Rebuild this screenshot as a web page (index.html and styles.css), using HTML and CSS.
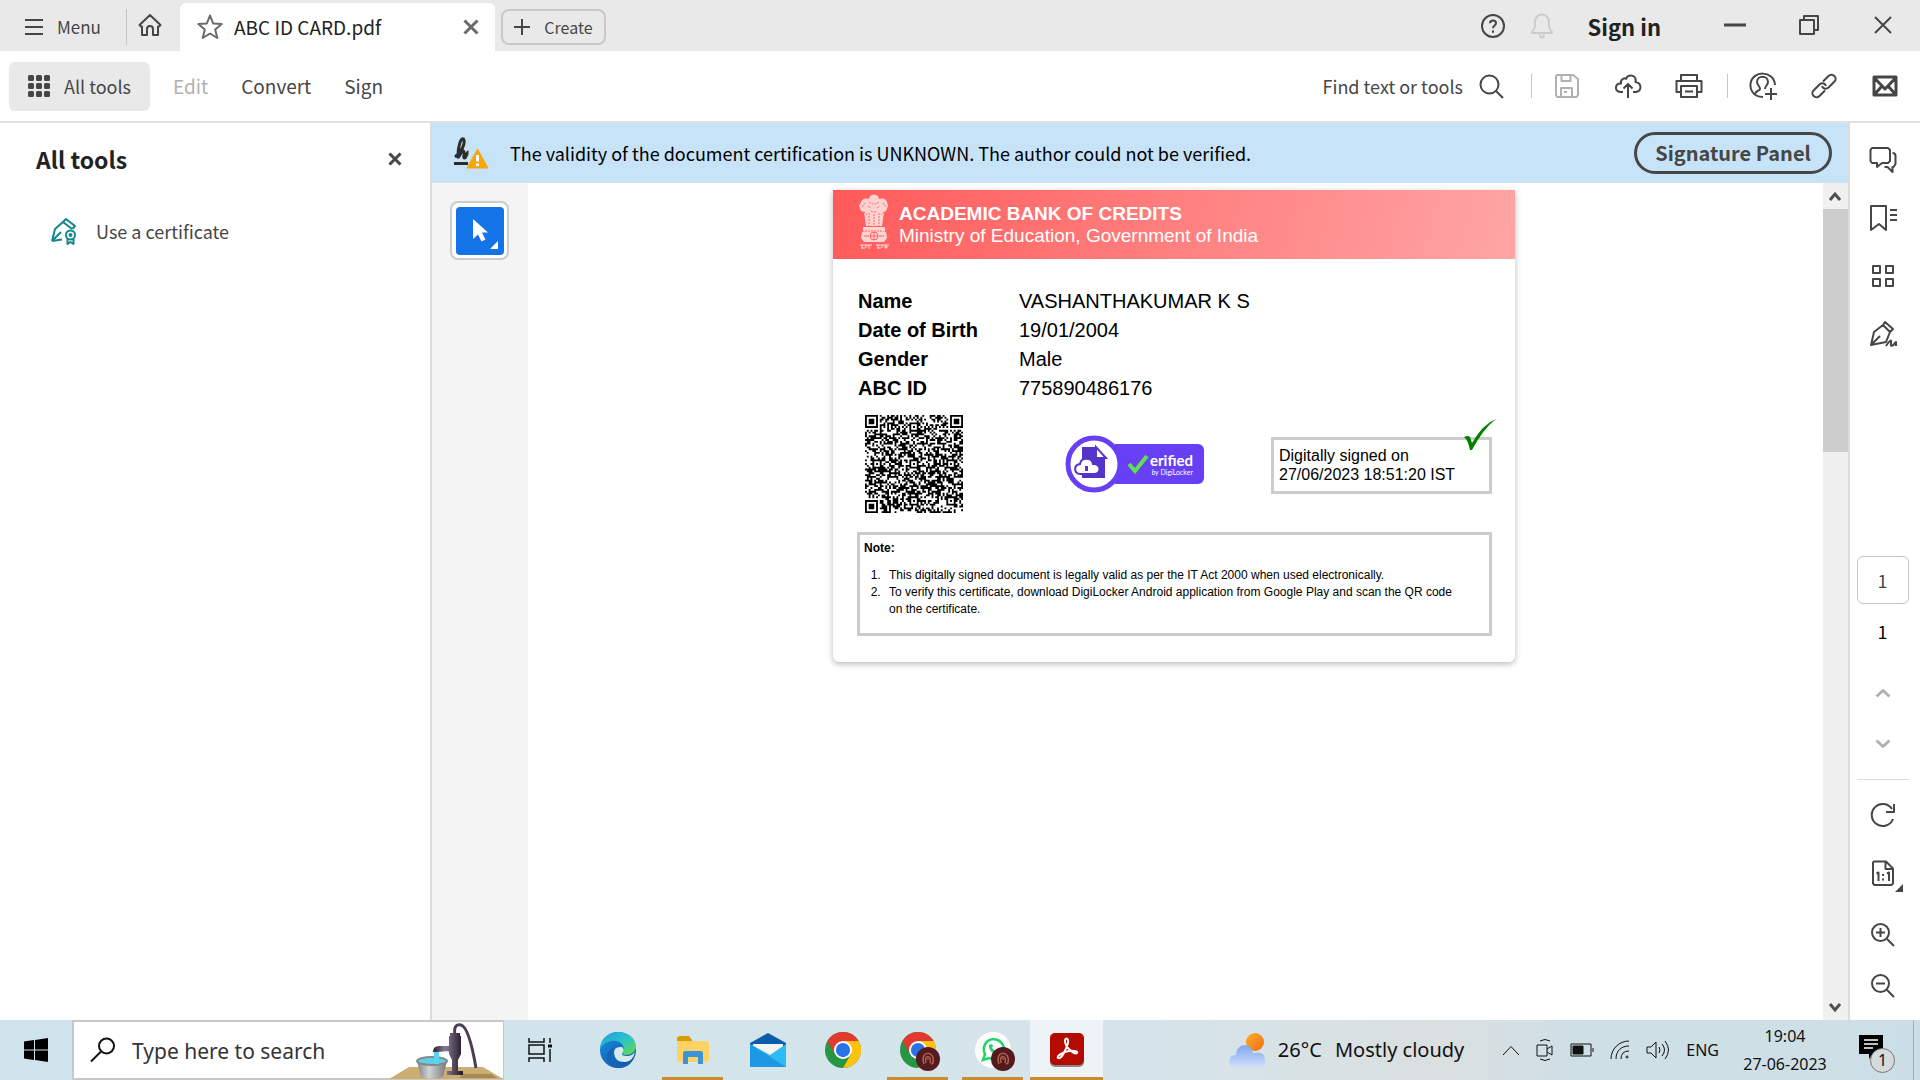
FILE: index.html
```
<!DOCTYPE html>
<html lang="en">
<head>
<meta charset="utf-8">
<title>ABC ID CARD.pdf</title>
<link rel="stylesheet" href="styles.css">
</head>
<body>
<header class="titlebar">
  <button class="menu-btn"><svg width="18" height="18" viewBox="0 0 18 18" class="ico"><path d="M0 2h18M0 9h18M0 16h18"/></svg>Menu</button>
  <button class="home-btn" aria-label="Home"><svg width="24" height="24" viewBox="0 0 24 24" class="ico"><path d="M1.500 12 12 2l10.500 10-1.500 1.500h-1V22h-5v-6a3 3 0 0 0-6 0v6H4v-8.500H3z"/></svg></button>
  <div class="tab">
    <svg width="28" height="28" viewBox="0 0 28 28" class="ico star"><path d="m14 2.500 3.200 8 8.500.6-6.500 5.500 2.100 8.400L14 20.500 6.700 25l2.100-8.400L2.300 11.100l8.500-.6z"/></svg>
    <span class="tab-name">ABC ID CARD.pdf</span>
    <button class="icon-btn" aria-label="Close tab"><svg width="16" height="16" viewBox="0 0 16 16" class="ico close"><path d="m1.500 1.500 13 13M14.500 1.500l-13 13"/></svg></button>
  </div>
  <button class="create-btn"><svg width="16" height="16" viewBox="0 0 16 16" class="ico"><path d="M8 0v16M0 8h16"/></svg>Create</button>
  <div class="title-actions">
    <button class="icon-btn" aria-label="Help"><svg width="26" height="26" viewBox="0 0 26 26" class="ico"><circle cx="13" cy="13" r="11"/><path d="M10 10.200c0-3.600 6-3.600 6 0 0 2.200-3 2.500-3 5M13 17.500v2.200"/></svg></button>
    <button class="icon-btn" aria-label="Notifications"><svg width="24" height="28" viewBox="0 0 24 28" class="ico pale"><path d="M2 21c0-3 3-3 3-7V10c0-10 14-10 14 0v4c0 4 3 4 3 7zM10 22.500c0 4 4 4 4 0"/></svg></button>
    <button class="signin">Sign in</button>
  </div>
  <div class="window-btns">
    <button aria-label="Minimize"><svg width="22" height="22" viewBox="0 0 22 22" class="ico heavy"><path d="M0 11h22"/></svg></button>
    <button aria-label="Restore"><svg width="20" height="20" viewBox="0 0 20 20" class="ico"><path d="M1 5h14v14H1zM5 5V1h14v14h-4"/></svg></button>
    <button aria-label="Close"><svg width="18" height="18" viewBox="0 0 18 18" class="ico"><path d="m1 1 16 16M17 1 1 17"/></svg></button>
  </div>
</header>

<nav class="toolbar">
  <button class="alltools-btn"><svg width="22" height="22" viewBox="0 0 22 22" class="ico cells"><path d="M1.500 1.500h3v3h-3zM9.500 1.500h3v3h-3zM17.500 1.500h3v3h-3zM1.500 9.500h3v3h-3zM9.500 9.500h3v3h-3zM17.500 9.500h3v3h-3zM1.500 17.500h3v3h-3zM9.500 17.500h3v3h-3zM17.500 17.500h3v3h-3z"/></svg>All tools</button>
  <button class="nav-btn" disabled>Edit</button>
  <button class="nav-btn">Convert</button>
  <button class="nav-btn">Sign</button>
  <button class="find-btn">Find text or tools<svg width="25" height="25" viewBox="0 0 25 25" class="ico"><circle cx="10.500" cy="10.500" r="9"/><path d="m17 17 7 7"/></svg></button>
  <div class="tool-icons">
    <button disabled aria-label="Save"><svg width="26" height="24" viewBox="0 0 26 24" class="ico grey"><path d="M3 1h16l5 4v16l-1.500 2h-19L2 21.500V2zM7.500 1v6h9V1M7 23v-9h11v9M10 18h3"/></svg></button>
    <button aria-label="Upload"><svg width="28" height="26" viewBox="0 0 28 26" class="ico"><path d="M9 19H6c-6-1-5-9 1-8.500C6 6 11 4.500 12 6c2-6 11-4 9.500 3C28 10 28 18 22 19h-3M14 25V11M9.500 15.500 14 11l4.500 4.500"/></svg></button>
    <button aria-label="Print"><svg width="28" height="26" viewBox="0 0 28 26" class="ico"><path d="M6 7V2h16v5M6 19H1.500V8h25v11H22M6 13h16v11H6zM10 18.500h8"/></svg></button>
  </div>
  <div class="tool-icons">
    <button aria-label="Share"><svg width="28" height="28" viewBox="0 0 28 28" class="ico"><path d="M14 25C3 25 1 16 1.500 12 3-2 25-2 26 13M6 22c1-4 5-3 5-5 0-3-3-4-3-7 0-7 11-7 11 0 0 3-3 4-3 7M22 16v12M16 22h12"/></svg></button>
    <button aria-label="Copy link"><svg width="26" height="26" viewBox="0 0 26 26" class="ico"><path d="M12 8.500 17.500 3c4-4 9.500 2 6 5.500l-6 6c-3 2.500-6 .5-6.500-1.500M14 17.500 8.500 23C4.500 27-1 21 2.500 17.500l6-6c3-2.500 6-.5 6.500 1.500"/></svg></button>
    <button aria-label="Send by email"><svg width="26" height="22" viewBox="0 0 26 22" class="ico heavy"><path d="M2 2h22v18H2zM2 2.500 13 14 24 2.500M2 20l8-9M24 20l-8-9"/></svg></button>
  </div>
</nav>

<main class="workspace">
  <aside class="tools-pane">
    <div class="pane-head"><h1>All tools</h1><button class="icon-btn" aria-label="Close pane"><svg width="14" height="14" viewBox="0 0 14 14" class="ico heavy"><path d="m1.500 1.500 11 11M12.500 1.500l-11 11"/></svg></button></div>
    <a href="#" class="pane-link"><svg width="28" height="28" viewBox="0 0 28 28" class="ico teal"><path d="M2 24 5 12l8-7 9 7M2 24l10-1.500M2.500 23.500 11 15M13 5l3-3 9 7-2.500 3"/><circle cx="20.500" cy="18" r="4.500"/><path d="M17.500 21.500V27l3-2 3 2v-5.500"/><circle cx="20.500" cy="18" r="1"/></svg>Use a certificate</a>
  </aside>

  <section class="viewer">
    <div class="banner">
      <svg width="36" height="32" viewBox="0 0 36 32"><path d="M2 20c6-4 11-14 8.500-18C8 0 5 9 5 19c0 5 3-6 5.500-5 2 1-1 7 1 7s2-6 4-6M1 26.500h14" fill="none" stroke="#2c2c2c" stroke-width="3"/><path d="M24.500 12 35 31H14z" fill="#f9a60d" stroke="#f9a60d" stroke-linejoin="round"/><path d="M24.500 18v6.500M24.500 26.500v2.500" stroke="#fff" stroke-width="3"/></svg>
      <p>The validity of the document certification is UNKNOWN. The author could not be verified.</p>
      <button class="sig-btn">Signature Panel</button>
    </div>
    <div class="stage">
      <div class="quick-tools">
        <button class="select-btn" aria-label="Select"><svg width="48" height="48" viewBox="0 0 48 48"><path d="M17 12v20l5-4.500 3.500 7 4-2-3.500-7h6z" fill="#fff"/><path d="M42 34v8h-8z" fill="#fff"/></svg></button>
      </div>
      <div class="page-area">
        <article class="card">
          <header class="card-head">
            <svg class="emblem" width="32" height="57" viewBox="0 0 32 57"><g fill="#fff" fill-opacity=".72"><path d="M12 2q4-3 8 0l1 3q6-2 8 3l1 4-2 5-2 1-2 14H8L6 18l-3-1-2-5 2-4q2-5 8-3z"/><path d="M5 33h22v4H5zM4 38q12-5 24 0l1 6-3 4H6l-3-4z"/></g><g fill="none" stroke="#ff6464"><path d="M11 8q5 4 10 0M10 12l3 2M19 14l3-2M13 17q3 2 6 0M7 9l-3 4M25 9l3 4M11 19v13M16 20v12M21 19v13M6 18l3 3M26 18l-3 3M7 37h18" stroke-dasharray="2 1"/><circle cx="16" cy="42" r="4"/><path d="M16 38v8M12 42h8M6 42h5M21 42h5"/></g><path d="M2 51h12M18 51h13M4 51v4M8 51v3M11 51v4M20 51v4M24 51v3M28 51v4M4 54h3M20 54h3M26 53h4" stroke="#fff" stroke-opacity=".8" fill="none"/></svg>
            <div><h2>ACADEMIC BANK OF CREDITS</h2><p>Ministry of Education, Government of India</p></div>
          </header>
          <div class="card-body">
            <dl class="details">
              <dt>Name</dt><dd>VASHANTHAKUMAR K S</dd>
              <dt>Date of Birth</dt><dd>19/01/2004</dd>
              <dt>Gender</dt><dd>Male</dd>
              <dt>ABC ID</dt><dd>775890486176</dd>
            </dl>
            <div class="proofs">
              <svg class="qr" id="qr" width="98" height="98" viewBox="0 0 53 53" role="img" aria-label="QR code"></svg>
              <div class="verified">
                <svg width="58" height="58" viewBox="0 0 58 58"><circle cx="29" cy="29" r="26" fill="#fff" stroke="#673ff5" stroke-width="5"/><path d="M17 12h14v11h9v20H17z" fill="#5535c9"/><path d="M31 12v11h10z" fill="#fff" stroke="#5535c9" stroke-width="2"/><path d="M15 39c-6 0-7-9 0-10 1-7 12-7 13 0 8-1 9 10 1 10z" fill="#fff" stroke="#5535c9" stroke-width="2"/><path d="M20 31h3v5h-3z" fill="#5535c9"/></svg>
                <div class="verified-tag"><svg width="22" height="20" viewBox="0 0 22 20"><path d="m2 10 6 7L20 2" fill="none" stroke="#5fe04c" stroke-width="4"/></svg><div><b>erified</b><small><i>by</i> DigiLocker</small></div></div>
              </div>
              <div class="signed">Digitally signed on<br>27/06/2023 18:51:20 IST<svg class="tick" width="34" height="32" viewBox="0 0 34 32"><path d="M1 18q4-2 6 0l2 6Q20 5 33 0 20 10 9 31H7Q5 21 1 18z" fill="#008000"/></svg></div>
            </div>
            <div class="note">
              <h3>Note:</h3>
              <ol>
                <li>This digitally signed document is legally valid as per the IT Act 2000 when used electronically.</li>
                <li>To verify this certificate, download DigiLocker Android application from Google Play and scan the QR code on the certificate.</li>
              </ol>
            </div>
          </div>
        </article>
      </div>
      <div class="scrollbar">
        <svg width="24" height="26" viewBox="0 0 24 26"><path d="m7 17 5-6 5 6" fill="none" stroke="#505050" stroke-width="3"/></svg>
        <div class="thumb"></div>
        <svg width="24" height="26" viewBox="0 0 24 26"><path d="m7 10 5 6 5-6" fill="none" stroke="#505050" stroke-width="3"/></svg>
      </div>
    </div>
  </section>

  <aside class="rail">
    <button class="rail-btn" aria-label="Comments"><svg width="28" height="28" viewBox="0 0 28 28" class="ico"><path d="M3 2h16l2 2v11l-2 2h-6l-5 4v-4H3l-1.500-2V4zM23.500 7q3 0 3 3v8l-2 3h-1v5l-5-5h-3"/></svg></button>
    <button class="rail-btn" aria-label="Bookmarks"><svg width="28" height="28" viewBox="0 0 28 28" class="ico"><path d="M3 2h14v24l-7-6-8 6V2zM21 6h7M21 11h7M21 16h7"/></svg></button>
    <button class="rail-btn" aria-label="Thumbnails"><svg width="24" height="24" viewBox="0 0 24 24" class="ico"><path d="M2 2h7v7H2zM15 2h7v7h-7zM2 15h7v7H2zM15 15h7v7h-7z"/></svg></button>
    <button class="rail-btn" aria-label="Signatures"><svg width="28" height="28" viewBox="0 0 28 28" class="ico"><path d="M2 25 5 12l9-7 7 7-4 10zM2 25l9-9M14 5l2-3 8 7-3 3M17 26q6-9 5-3t5-1v4"/></svg></button>
    <div class="rail-bottom">
      <input class="page-box" type="text" value="1" aria-label="Page number">
      <span class="page-total">1</span>
      <button class="step-btn" disabled aria-label="Previous page"><svg width="16" height="10" viewBox="0 0 16 10" class="ico grey heavy"><path d="m1.500 8.500 6.500-6 6.500 6"/></svg></button>
      <button class="step-btn" disabled aria-label="Next page"><svg width="16" height="10" viewBox="0 0 16 10" class="ico grey heavy"><path d="m1.500 1.500 6.500 6 6.500-6"/></svg></button>
      <hr>
      <button class="view-btn" aria-label="Rotate"><svg width="26" height="26" viewBox="0 0 26 26" class="ico"><path d="M23 17a11 11 0 1 1-1-10M24 2v8h-8"/></svg></button>
      <button class="view-btn fit-btn" aria-label="Actual size"><svg width="24" height="26" viewBox="0 0 24 26" class="ico"><path d="M3 1.500h12l7 7v15L20.500 25h-17L2 23.500v-21zM14.500 1.500V9H22M5.500 13.500l2-1V21M16 13.500l2-1V21M12 14v2M12 18.500v2"/></svg></button>
      <button class="zoom-btn" aria-label="Zoom in"><svg width="26" height="26" viewBox="0 0 26 26" class="ico"><circle cx="10.500" cy="10.500" r="8.500"/><path d="m17 17 7 7M10.500 6v9M6 10.500h9"/></svg></button>
      <button class="zoom-btn" aria-label="Zoom out"><svg width="26" height="26" viewBox="0 0 26 26" class="ico"><circle cx="10.500" cy="10.500" r="8.500"/><path d="m17 17 7 7M6 10.500h9"/></svg></button>
    </div>
  </aside>
</main>

<svg width="0" height="0" class="defs" aria-hidden="true">
  <defs>
    <linearGradient id="edgeTop" x1="0" y1="0" x2="1" y2="1"><stop offset="0" stop-color="#1e9ce8"/><stop offset=".5" stop-color="#2ac3c8"/><stop offset="1" stop-color="#69db3f"/></linearGradient>
    <linearGradient id="edgeLow" x1="0" y1="0" x2="1" y2="1"><stop offset="0" stop-color="#1b8fe0"/><stop offset="1" stop-color="#0c4f9c"/></linearGradient>
    <linearGradient id="cloud" x1="0" y1="0" x2="0" y2="1"><stop offset="0" stop-color="#7fa8ee"/><stop offset="1" stop-color="#d3e0fb"/></linearGradient>
    <linearGradient id="sun" x1="0" y1="0" x2="1" y2="1"><stop offset="0" stop-color="#fbb02a"/><stop offset="1" stop-color="#f26b12"/></linearGradient>
    <linearGradient id="metal" x1="0" y1="0" x2="1" y2="0"><stop offset="0" stop-color="#2a2030"/><stop offset=".4" stop-color="#8a7d94"/><stop offset="1" stop-color="#1e1724"/></linearGradient>
    <linearGradient id="pail" x1="0" y1="0" x2="1" y2="0"><stop offset="0" stop-color="#7d8285"/><stop offset=".4" stop-color="#d0d3d5"/><stop offset="1" stop-color="#777"/></linearGradient>
    <symbol id="chrome" viewBox="0 0 48 48"><circle cx="24" cy="24" r="24" fill="#259644"/><path d="M3.200 12A24 24 0 0 1 44.800 12H24L13.600 30z" fill="#e23a2e"/><path d="M44.800 12A24 24 0 0 1 24 48L34.400 30 24 12z" fill="#fdc30c"/><circle cx="24" cy="24" r="12" fill="#fff"/><circle cx="24" cy="24" r="9.500" fill="#2a72e8"/></symbol>
    <symbol id="profile" viewBox="0 0 24 24"><circle cx="12" cy="12" r="12" fill="#541a20"/><path d="M8 17c-5-14 12-14 9-1l-2 1M10 16c-3-9 7-8 4 0M12 11v2" fill="none" stroke="#b06048" stroke-width="1.500"/></symbol>
  </defs>
</svg>

<footer class="taskbar">
  <button class="start-btn" aria-label="Start"><svg width="24" height="24" viewBox="0 0 24 24"><path d="M0 3.500 10 2v9.500H0zM11 2l13-2v11.500H11zM0 12.500h10V22L0 20.500zM11 12.500h13V24l-13-2z"/></svg></button>
  <div class="searchbox">
    <svg width="26" height="26" viewBox="0 0 26 26"><circle cx="16.500" cy="9" r="7.500" fill="none" stroke="#111" stroke-width="2"/><path d="M11 14.500 1 24.500" stroke="#111" stroke-width="2"/></svg>
    <input type="text" placeholder="Type here to search" aria-label="Search">
    <svg width="114" height="57" viewBox="0 0 114 57"><path d="M20 45h74l20 12H0z" fill="#cdae72"/><path d="M74 52h28l6 4H70z" fill="#a98a52"/><path d="M66 14q-2-13 6-11 8 2 15 43" fill="none" stroke="#4a3d54" stroke-width="3"/><path d="M61 11h10v4h-10zM60 14h12v18l-3 6h-6l-3-6zM63 37h6v13h-6zM58 49h16v4H58zM60 24H50q-6 0-6 6h5l11-1z" fill="url(#metal)"/><path d="M28 39h30l-4 16q-12 3-22 0z" fill="url(#pail)"/><ellipse cx="43" cy="39" rx="15" ry="4" fill="#5fd0ea" stroke="#888" stroke-width="2"/><path d="M45 30h5v12h-5z" fill="#58d6f6"/></svg>
  </div>
  <button class="taskview-btn" aria-label="Task view"><svg width="24" height="24" viewBox="0 0 24 24" fill="none" stroke="#111" stroke-width="1.500"><path d="M1 0v4h15V0M1 24v-4h15v4M1 7h15v9H1zM22 0v5M22 11v13"/><path d="M20 8h4" stroke-width="3"/></svg></button>
  <div class="apps">
    <button aria-label="Edge"><svg width="36" height="36" viewBox="0 0 36 36"><circle cx="18" cy="18" r="18" fill="url(#edgeLow)"/><path d="M0 17C1-5 34-5 36 14c0 6-5 9-10 9-4 0-5-2-4-3 5-6-3-13-11-11Q3 11 0 17z" fill="url(#edgeTop)"/><path d="M22 15q3 3 0 6-1 3 5 3 5 0 8-4-2 9-9 10-11 1-12-9 0-7 8-6z" fill="#d8e8f0"/><path d="M13 19q-3 10 7 13 7 1 13-4-5 8-14 8Q7 35 7 24q1-7 8-9z" fill="#1564b4"/></svg></button>
    <button class="open" aria-label="File Explorer"><svg width="34" height="28" viewBox="0 0 34 28"><path d="M1 3q0-3 3-3h9l3 4v5H1z" fill="#dc9b05"/><path d="M1 5h29q3 0 3 3v15q0 3-3 3H3q-2 0-2-3z" fill="#fdd463"/><path d="M7 28V17q0-2 3-2h14q3 0 3 2v11h-5v-7H12v7z" fill="#3b92d8"/></svg></button>
    <button aria-label="Mail"><svg width="36" height="34" viewBox="0 0 36 34"><path d="M0 10 18 0l18 10v6H0z" fill="#0b5cab"/><path d="M3 11h30v9L18 28 3 20z" fill="#f4f4f4"/><path d="M0 11v23h36V11L20 22z" fill="#2cbcf2"/><path d="M0 11v23h36z" fill="#1d98e2"/></svg></button>
    <button aria-label="Chrome"><svg width="36" height="36"><use href="#chrome"/></svg></button>
    <button class="open" aria-label="Chrome profile"><svg width="36" height="36"><use href="#chrome"/></svg><svg class="badge" width="24" height="24"><use href="#profile"/></svg></button>
    <button class="open" aria-label="WhatsApp"><svg width="36" height="36" viewBox="0 0 36 36"><circle cx="18" cy="18" r="18" fill="#fff"/><path d="m8 28 2-6a10 10 0 1 1 4 4z" fill="none" stroke="#25d366" stroke-width="2.500"/><path d="M14 13c-1 5 4 9 9 9l1-3-3-1-1 1-3-3 1-2-1-2z" fill="#25d366"/></svg><svg class="badge" width="24" height="24"><use href="#profile"/></svg></button>
    <button class="open active" aria-label="Acrobat"><svg width="34" height="34" viewBox="0 0 34 34"><rect y="1" width="34" height="33" rx="5" fill="#888"/><rect width="34" height="32" rx="5" fill="#b30b00"/><path d="M8 25c-2-2 5-6 11-7 6-1 9 1 8 2-3 2-12-6-12-12 0-4 4-3 3 2-2 7-7 17-10 15z" fill="none" stroke="#fff" stroke-width="2"/></svg></button>
  </div>
  <div class="tray">
    <button class="weather"><svg width="36" height="36" viewBox="0 0 36 36"><circle cx="26" cy="10" r="9" fill="url(#sun)"/><path d="M7 36C-2 35-2 23 7 23 7 11 23 10 24 21c10-1 12 1 12 8 0 6-3 7-8 7z" fill="url(#cloud)"/></svg><span>26°C</span><span>Mostly cloudy</span></button>
    <button aria-label="Hidden icons"><svg width="18" height="11" viewBox="0 0 18 11" class="line"><path d="m1 10 8-8.500L17 10"/></svg></button>
    <button aria-label="Meet now"><svg width="18" height="24" viewBox="0 0 18 24" class="line"><path d="M4 3q5-3 10 0M4 21q5 3 10 0M1 7h10v11H1zM11 11l5-3v9l-5-3"/></svg></button>
    <button aria-label="Battery"><svg width="24" height="14" viewBox="0 0 24 14" class="line"><path d="M1 1h20v12H1zM23 5v4"/><path d="M3 3h10v8H3z" fill="#111"/></svg></button>
    <button aria-label="Wi-Fi"><svg width="20" height="20" viewBox="0 0 20 20" class="line"><path d="M1 19C1 9 9 1 19 1M6 19C6 11 11 6 19 6M11 19q0-8 8-8"/><circle cx="17" cy="17" r="1"/></svg></button>
    <button aria-label="Volume"><svg width="24" height="20" viewBox="0 0 24 20" class="line"><path d="M1 7h4l5-5v16l-5-5H1zM13 7q2 3 0 6M16 4q5 6 0 12M19 1q7 9 0 18"/></svg></button>
    <span class="lang">ENG</span>
    <time class="clock">19:04<br>27-06-2023</time>
    <button class="notice" aria-label="Notifications"><svg width="36" height="38" viewBox="0 0 36 38"><path d="M0 0h24v19H14l-4 5v-5H0z"/><path d="M5 5h14M5 9h14M5 13h9" stroke="#fff" stroke-width="1.500"/></svg><span class="count">1</span></button>
  </div>
</footer>
<script src="qr.js"></script>
</body>
</html>
```
FILE: styles.css
```
* { box-sizing: border-box; }
body {
  margin: 0;
  min-height: 100vh;
  display: flex;
  flex-direction: column;
  background: #fff;
  color: #464646;
  font: 18px/26px "Noto Sans CJK SC", "Noto Sans", sans-serif;
}
button {
  border: 0;
  padding: 0;
  background: none;
  color: inherit;
  font: inherit;
  display: flex;
  align-items: center;
  justify-content: center;
}
h1, h2, h3, p, dl, dd, ol { margin: 0; padding: 0; }
svg { flex: none; display: block; }
.defs { position: absolute; }
.ico { fill: none; stroke: #464646; stroke-width: 2; stroke-linejoin: round; }
.heavy, .cells, .close { stroke-width: 3; }
.close { stroke: #6a6a6a; }
.pale { stroke: #cbcbcb; }
.grey { stroke: #b1b1b1; }
.teal { stroke: #12878a; }
.line { fill: none; stroke: #111; stroke-width: 1; }

.titlebar { display: flex; height: 51px; background: #e9e9e9; }
.menu-btn { width: 127px; height: 36px; margin: 9px 0 0; padding-left: 25px; gap: 14px; justify-content: flex-start; border-right: 1px solid #c6c6c6; font-size: 17px; }
.home-btn { width: 46px; margin-right: 7px; padding-bottom: 1px; }
.tab { display: flex; align-items: center; width: 315px; margin-top: 3px; padding: 0 16px; border-radius: 6px 6px 0 0; background: #fff; }
.star { stroke: #6a6a6a; }
.tab-name { flex: 1; margin-left: 10px; font-size: 19px; color: #222; }
.create-btn { width: 105px; height: 36px; margin: 9px 0 0 6px; gap: 14px; border: 2px solid #c8c8c8; border-radius: 8px; font-size: 16px; }
.title-actions { display: flex; align-items: center; gap: 24px; margin-left: auto; margin-right: 37px; }
.signin { margin-left: 10px; font-size: 22px; font-weight: 700; color: #222; }
.window-btns { display: flex; }
.window-btns button { width: 74px; padding-bottom: 2px; }

.toolbar { display: flex; align-items: center; height: 72px; padding: 0 5px 0 9px; border-bottom: 2px solid #e1e1e1; }
.alltools-btn { width: 141px; height: 49px; gap: 14px; border-radius: 6px; background: #e9e9e9; }
.nav-btn { margin-left: 33px; font-size: 19px; }
.alltools-btn + .nav-btn { margin-left: 23px; }
.nav-btn:disabled { color: #b1b1b1; }
.find-btn { gap: 16px; margin-left: auto; margin-right: 27px; }
.tool-icons { display: flex; align-items: center; gap: 1px; height: 24px; padding-left: 5px; border-left: 1px solid #c6c6c6; }
.tool-icons + .tool-icons { margin-left: 8px; }
.tool-icons button { width: 60px; }

.workspace { flex: 1; display: flex; }
.tools-pane { width: 432px; border-right: 2px solid #dcdcdc; padding: 23px 28px 0 36px; }
.pane-head { display: flex; align-items: center; justify-content: space-between; }
.pane-head h1 { font-size: 23px; line-height: 26px; color: #222; }
.pane-link { display: flex; align-items: center; gap: 18px; margin: 45px 0 0 14px; color: #464646; text-decoration: none; }

.viewer { flex: 1; display: flex; flex-direction: column; }
.banner { display: flex; align-items: center; height: 60px; padding: 0 16px 0 21px; background: #c7e3f8; color: #000; }
.banner p { flex: 1; margin-left: 21px; }
.sig-btn { width: 198px; height: 42px; border: 3px solid #464646; border-radius: 21px; color: #464646; font-size: 20px; font-weight: 700; }
.stage { flex: 1; display: flex; }
.quick-tools { width: 96px; padding: 18px 0 0 18px; background: #f4f4f4; }
.select-btn { width: 59px; height: 59px; border: 2px solid #ccc; border-radius: 8px; background: #fff; }
.select-btn svg { border-radius: 4px; background: #1473e6; }
.page-area { flex: 1; padding: 7px 3px 0 0; }
.scrollbar { display: flex; flex-direction: column; width: 25px; background: #f0f0f0; }
.thumb { height: 243px; margin-bottom: auto; background: #cdcdcd; }

.card { max-width: 682px; margin: 0 auto; border-radius: 0 0 6px 6px; background: #fff; color: #000; box-shadow: 0 2px 6px rgba(0, 0, 0, .28); font-family: "Liberation Sans", Arial, sans-serif; }
.card-head { display: flex; align-items: flex-start; gap: 9px; height: 69px; padding: 4px 25px; background: linear-gradient(105deg, #ff5a5a, #ffa5a5); color: #fff; }
.card-head div { padding-top: 9px; }
.card-head h2, .card-head p { font-size: 19px; line-height: 22px; }
.card-body { padding: 28px 23px 26px 24px; }
.details { display: grid; grid-template-columns: 161px 1fr; padding-left: 1px; font-size: 20px; line-height: 29px; }
.details dt { font-weight: 700; }
.proofs { display: flex; align-items: center; margin: 12px 0 19px; padding-left: 8px; }
.verified { display: flex; align-items: center; margin-left: 102px; }
.verified-tag { display: flex; align-items: center; gap: 1px; width: 89px; height: 40px; margin-left: -8px; padding-left: 12px; border-radius: 0 6px 6px 0; background: #673ff5; color: #fff; font: 8px/10px Lato, sans-serif; }
.verified svg { position: relative; }
.verified-tag b { display: block; font-size: 15px; line-height: 16px; }
.verified-tag small { display: block; font-size: 7px; line-height: 8px; text-align: right; }
.signed { position: relative; width: 221px; height: 57px; margin: 3px 0 0 auto; padding: 6px 5px; border: 3px solid #ccc; font-size: 16px; line-height: 19px; }
.tick { position: absolute; right: -8px; top: -21px; }
.note { min-height: 104px; padding: 5px 22px 5px 4px; border: 3px solid #ccc; font-size: 12px; line-height: 17px; }
.note h3 { margin-bottom: 10px; font-size: 12px; }
.note ol { padding-left: 20px; }
.note li { padding-left: 5px; }

.rail { display: flex; flex-direction: column; align-items: center; width: 72px; padding: 8px 5px 9px 0; border-left: 2px solid #dcdcdc; }
.rail-btn { width: 52px; height: 58px; }
.rail-bottom { display: flex; flex-direction: column; align-items: center; width: 52px; margin-top: auto; }
.page-box { width: 52px; height: 48px; margin-bottom: 14px; border: 1px solid #c6c6c6; border-radius: 6px; background: #fff; color: #464646; font: inherit; text-align: center; }
.page-total { margin-bottom: 23px; color: #000; }
.step-btn { width: 52px; height: 51px; }
.rail hr { width: 52px; height: 1px; margin: 10px 0 5px; border: 0; background: #dcdcdc; }
.view-btn { width: 52px; height: 60px; }
.fit-btn { position: relative; height: 56px; margin-bottom: 8px; }
.fit-btn::after { content: ""; position: absolute; right: 6px; bottom: 9px; border: 4px solid; border-color: transparent #464646 #464646 transparent; }
.zoom-btn { width: 52px; height: 51px; }

.taskbar { display: flex; height: 60px; background: linear-gradient(90deg, #cfe3ec, #d6e5eb 60%, #dadfe0 75%, #cfdfe6 82%, #cddfe6); color: #111; font-family: "Noto Sans", sans-serif; }
.start-btn { width: 72px; }
.searchbox { display: flex; align-items: center; width: 432px; padding-left: 16px; border: 2px solid #c8c8c8; border-right-width: 1px; background: #fff; }
.searchbox input { flex: 1; min-width: 0; margin-left: 16px; padding: 2px 0 0; border: 0; outline: 0; background: none; font: 21px/28px "Noto Sans", sans-serif; }
.searchbox input::placeholder { color: #333; opacity: 1; }
.taskview-btn { width: 72px; margin-right: 4px; }
.apps { display: flex; }
.apps button { position: relative; width: 75px; height: 60px; }
.open::after { content: ""; position: absolute; left: 7px; right: 7px; bottom: 0; height: 3px; background: #cc8a2e; }
.badge { position: absolute; right: 15px; bottom: 9px; }
.apps .active { width: 73px; background: #edf3f6; }
.active::after { left: 0; right: 0; }
.tray { display: flex; align-items: center; margin-left: auto; padding-right: 6px; border-right: 1px solid #9fb0b8; margin-right: 6px; }
.tray button { margin-right: 16px; }
.tray .weather { gap: 13px; margin-right: 38px; font-size: 20px; }
.lang { font-size: 16px; }
.clock { width: 132px; text-align: center; font-size: 16px; line-height: 28px; }
.tray .notice { position: relative; margin: 8px 12px 0 8px; }
.count { position: absolute; right: 0; bottom: 0; width: 25px; height: 25px; border: 1px solid #777; border-radius: 50%; background: #d5dadd; font-size: 16px; line-height: 23px; text-align: center; }
```
FILE: qr.js
```
// Builds the 53-module code: finder and alignment patterns, timing lines, data.
(function () {
  var N = 53, seed = 20230627, d = "";
  function rnd() { seed = (seed * 1103515245 + 12345) % 2147483648; return seed / 2147483648; }
  function ring(x, y, cx, cy) { return Math.max(Math.abs(x - cx), Math.abs(y - cy)); }
  var finders = [[3, 3], [49, 3], [3, 49]];
  var aligns = [[26, 6], [6, 26], [26, 26], [46, 26], [26, 46], [46, 46]];
  for (var y = 0; y < N; y++) {
    for (var x = 0; x < N; x++) {
      var on = rnd() > 0.48;
      if (x === 6 || y === 6) on = (x + y) % 2 === 0;
      aligns.forEach(function (a) { var r = ring(x, y, a[0], a[1]); if (r <= 2) on = r !== 1; });
      finders.forEach(function (f) { var r = ring(x, y, f[0], f[1]); if (r <= 4) on = r !== 4 && r !== 2; });
      if (on) d += "M" + x + " " + y + "h1v1h-1z";
    }
  }
  var path = document.createElementNS("http://www.w3.org/2000/svg", "path");
  path.setAttribute("d", d);
  document.getElementById("qr").appendChild(path);
})();
```
